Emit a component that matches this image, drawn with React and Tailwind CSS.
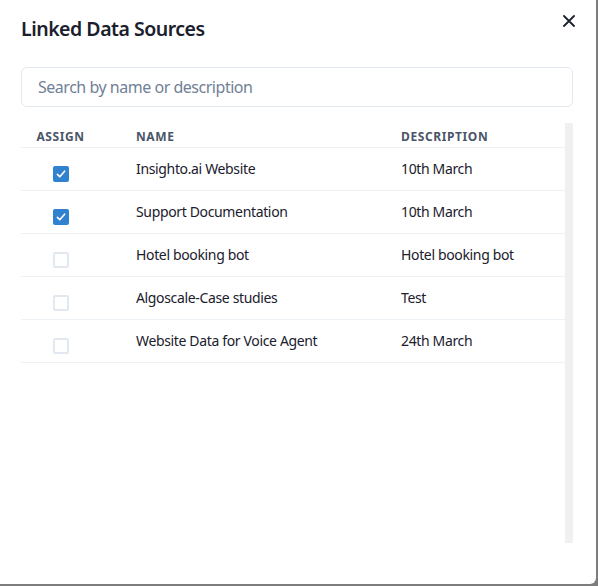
import React from 'react';

const rows = [
  { name: 'Insighto.ai Website', desc: '10th March', checked: true },
  { name: 'Support Documentation', desc: '10th March', checked: true },
  { name: 'Hotel booking bot', desc: 'Hotel booking bot', checked: false },
  { name: 'Algoscale-Case studies', desc: 'Test', checked: false },
  { name: 'Website Data for Voice Agent', desc: '24th March', checked: false },
];

const Checkbox = ({ checked }) =>
  checked ? (
    <span className="w-4 h-4 rounded-[2px] bg-[#3182ce] flex items-center justify-center">
      <svg width="10" height="8" viewBox="0 0 12 10" fill="none">
        <polyline points="1.5 5.5 4.5 8.5 10.5 1.5" stroke="white" strokeWidth="2" strokeLinecap="round" strokeLinejoin="round" />
      </svg>
    </span>
  ) : (
    <span className="w-4 h-4 rounded-[2px] border-2 border-[#e2e8f0] bg-white" />
  );

export default function App() {
  return (
    <div className="w-full h-[586px] bg-[#7d7d7d]" style={{ fontFamily: '"Noto Sans", "Open Sans", sans-serif' }}>
      <div className="w-[596px] h-[584px] bg-white rounded-br-[6px] flex flex-col">
        {/* header */}
        <div className="flex items-start justify-between pl-[21px] pr-[21px] pt-[15px]">
          <h2 className="text-[19.5px] leading-[28px] font-semibold tracking-[-0.025em] text-[#1a202c]">Linked Data Sources</h2>
          <button className="mt-0 w-[12px] h-[12px] text-[#1a202c]">
            <svg width="12" height="12" viewBox="0 0 12 12">
              <path d="M1 1 L11 11 M11 1 L1 11" stroke="currentColor" strokeWidth="1.8" strokeLinecap="round" />
            </svg>
          </button>
        </div>

        {/* search */}
        <div className="pl-[21px] pr-[23px] mt-[24px]">
          <input
            placeholder="Search by name or description"
            className="w-full h-[40px] border border-[#e2e8f0] rounded-[6px] px-[16px] text-[16px] tracking-[-0.03em] text-[#1a202c] placeholder:text-[#718096] outline-none"
          />
        </div>

        {/* table */}
        <div className="flex ml-[21px] mr-[23px] mt-[16px] h-[420px]">
          <div className="flex-1">
            <div className="grid grid-cols-[79px_277px_1fr] h-[25px] border-b border-[#edf2f7] text-[12px] font-bold tracking-[0.05em] text-[#4a5568] leading-[16px]">
              <div className="text-center pt-[6px]">ASSIGN</div>
              <div className="pl-[36px] pt-[6px]">NAME</div>
              <div className="pl-[24px] pt-[6px]">DESCRIPTION</div>
            </div>
            {rows.map((r) => (
              <div key={r.name} className="grid grid-cols-[79px_277px_1fr] h-[43px] border-b border-[#edf2f7] text-[14px] leading-[20px] tracking-[-0.025em] text-[#1a202c]">
                <div className="flex justify-center pt-[18px]">
                  <Checkbox checked={r.checked} />
                </div>
                <div className="pl-[36px] pt-[11px]">{r.name}</div>
                <div className="pl-[24px] pt-[11px]">{r.desc}</div>
              </div>
            ))}
          </div>
          <div className="w-[8px] bg-[#f0f0f0]" />
        </div>
      </div>
    </div>
  );
}
